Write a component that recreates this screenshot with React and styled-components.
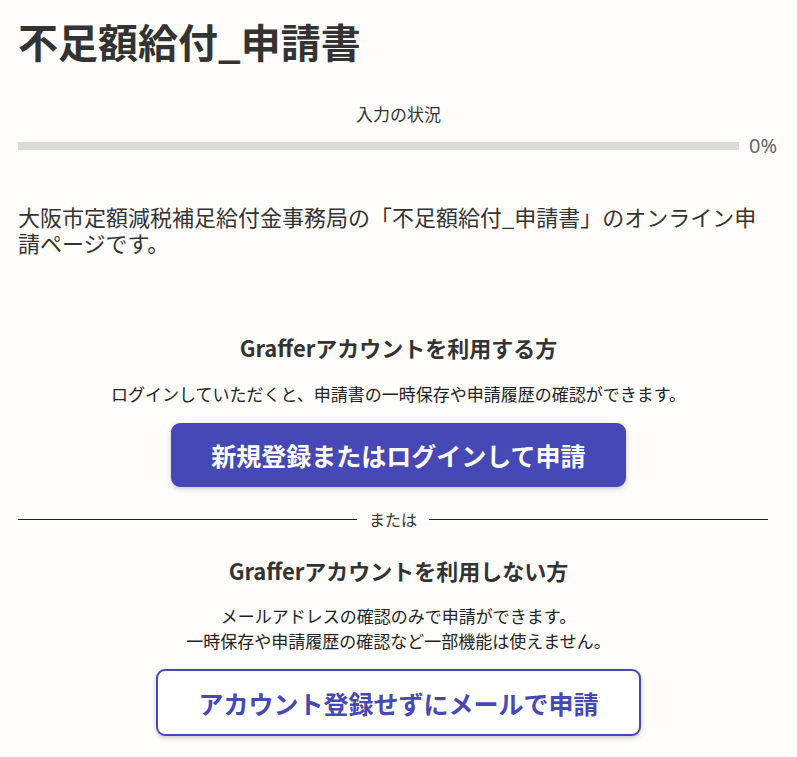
import React from 'react';
import styled, { createGlobalStyle } from 'styled-components';

const GlobalStyle = createGlobalStyle`
  html, body {
    margin: 0;
    padding: 0;
    background: #fefdfc;
  }
  body {
    font-family: 'Noto Sans CJK JP', 'Noto Sans', sans-serif;
    color: #333;
  }
`;

const App = () => {
  return (
    <>
      <GlobalStyle />
      <Page>
        <Title>不足額給付_申請書</Title>
        <Progress>
          <ProgressLabel>入力の状況</ProgressLabel>
          <ProgressRow>
            <Track>
              <Fill style={{ width: '0%' }} />
            </Track>
            <Percent>0%</Percent>
          </ProgressRow>
        </Progress>
        <Lead>
          大阪市定額減税補足給付金事務局の「不足額給付_申請書」のオンライン申請ページです。
        </Lead>
        <Section $top={77}>
          <Heading>Grafferアカウントを利用する方</Heading>
          <Note $top={19} $line={26}>
            ログインしていただくと、申請書の一時保存や申請履歴の確認ができます。
          </Note>
          <Button $primary $top={16} $height={64}>
            新規登録またはログインして申請
          </Button>
        </Section>
        <Divider>
          <span>または</span>
        </Divider>
        <Section $top={24}>
          <Heading>Grafferアカウントを利用しない方</Heading>
          <Note $top={18} $line={25}>
            メールアドレスの確認のみで申請ができます。
            <br />
            一時保存や申請履歴の確認など一部機能は使えません。
          </Note>
          <Button $top={16} $height={67} $pad={40}>
            アカウント登録せずにメールで申請
          </Button>
        </Section>
      </Page>
    </>
  );
};

const Page = styled.main`
  padding: 13px 18px 40px;
`;

const Title = styled.h1`
  margin: 0;
  font-size: 40px;
  line-height: 56px;
  font-weight: 700;
  color: #333;
`;

const Progress = styled.div`
  margin-top: 33px;
`;

const ProgressLabel = styled.div`
  text-align: center;
  font-size: 17px;
  line-height: 24px;
  color: #333;
`;

const ProgressRow = styled.div`
  display: flex;
  align-items: center;
  gap: 10px;
  margin-top: 7px;
`;

const Track = styled.div`
  flex: 1;
  height: 8px;
  background: #dcdad9;
`;

const Fill = styled.div`
  height: 100%;
  background: #4649b5;
`;

const Percent = styled.span`
  font-family: 'Noto Sans', sans-serif;
  font-size: 20px;
  line-height: 26px;
  color: #666;
  width: 30px;
`;

const Lead = styled.p`
  margin: 44px 11px 0 0;
  font-size: 22px;
  line-height: 26px;
  color: #333;
`;

const Section = styled.section`
  display: flex;
  flex-direction: column;
  align-items: center;
  margin-top: ${(p) => p.$top}px;
`;

const Heading = styled.h2`
  margin: 0;
  font-size: 22px;
  line-height: 30px;
  font-weight: 700;
  color: #333;
`;

const Note = styled.p`
  margin: ${(p) => p.$top}px 0 0;
  font-size: 17px;
  line-height: ${(p) => p.$line}px;
  text-align: center;
  color: #222;
`;

const Button = styled.button`
  margin-top: ${(p) => p.$top}px;
  padding: 0 ${(p) => p.$pad ?? 38}px;
  height: ${(p) => p.$height}px;
  border-radius: 9px;
  border: 2px solid #4649b5;
  background: ${(p) => (p.$primary ? '#4649b5' : '#fff')};
  color: ${(p) => (p.$primary ? '#fff' : '#4649b5')};
  font-family: inherit;
  font-size: 25px;
  font-weight: 700;
  box-shadow: 0 2px 5px rgba(0, 0, 0, 0.2);
  cursor: pointer;
`;

const Divider = styled.div`
  display: flex;
  align-items: center;
  gap: 12px;
  margin: 20px 11px 0 0;
  font-size: 16px;
  line-height: 24px;
  color: #333;
  &::before,
  &::after {
    content: '';
    flex: 1;
    height: 1px;
    background: #222;
  }
`;

export default App;
